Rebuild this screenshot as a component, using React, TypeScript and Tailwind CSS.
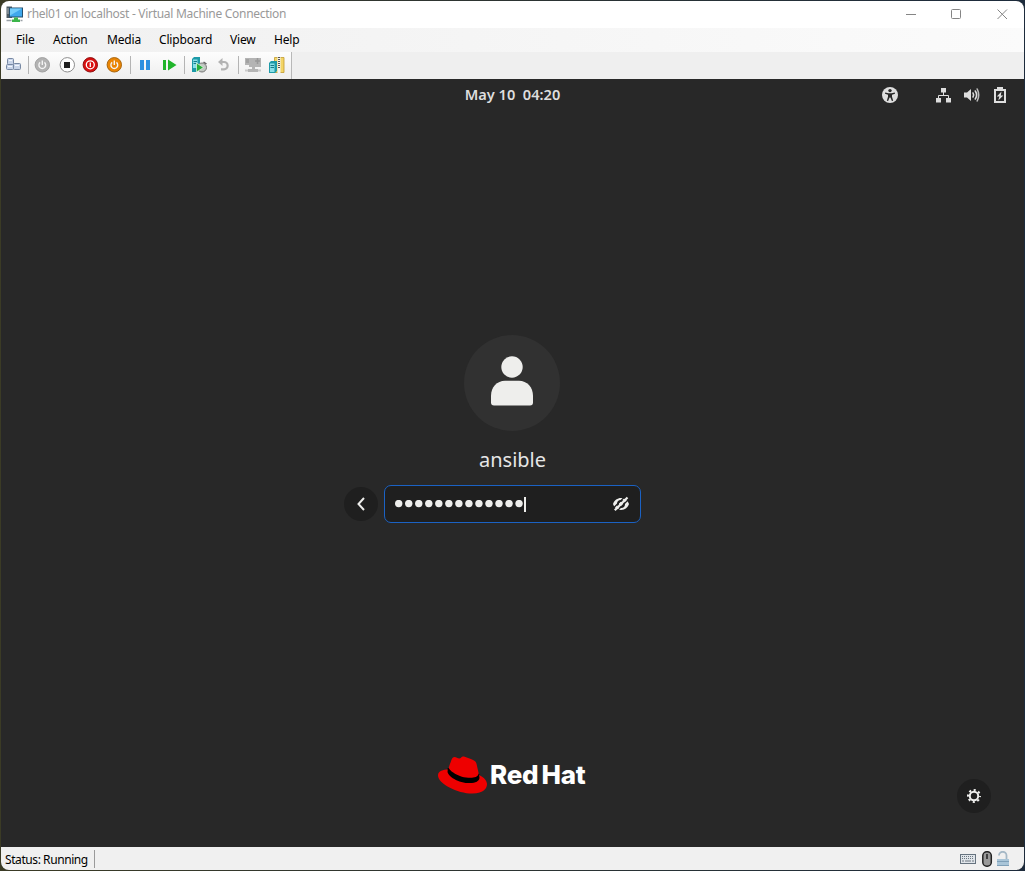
import React from "react";

const Sep = ({ m }: { m: string }) => <div className={`w-px h-[18px] bg-[#b4b4b4] shrink-0 ${m}`} />;

const MENU: [string, string][] = [
  ["File", "w-[37px]"],
  ["Action", "w-[54px]"],
  ["Media", "w-[52px]"],
  ["Clipboard", "w-[71px]"],
  ["View", "w-[44px]"],
  ["Help", "w-[40px]"],
];

const Power = ({ fill, stroke, icon }: { fill: string; stroke: string; icon: string }) => (
  <svg width="16" height="16" viewBox="0 0 16 16" className="shrink-0">
    <circle cx="8.3" cy="7.8" r="7.2" fill={fill} stroke={stroke} />
    {icon === "stop" && <rect x="5" y="5" width="6" height="6" fill="#222" />}
    {icon === "power" && (
      <g fill="none" stroke="#f4f4f4" strokeWidth="1.4">
        <path d="M6.2 5.4a3.4 3.4 0 1 0 4.2 0M8.300 3.4V8" />
      </g>
    )}
    {icon === "off" && (
      <g fill="none" stroke="#fff" strokeWidth="1.3">
        <circle cx="8.3" cy="7.8" r="4" />
        <path d="M8.300 5.6v4.4" />
      </g>
    )}
  </svg>
);

const TitleIcon = () => (
  <svg width="17" height="17" viewBox="0 0 17 17">
    <rect x="0.500" y="0.5" width="5.500" height="11.500" fill="#4e5a62" />
    <path d="M1 3h4M1 5h4M1 7h3" stroke="#aab4ba" />
    <rect x="3.500" y="2" width="13" height="9" fill="#3fa8ec" stroke="#26506e" />
    <path d="M4 2.500h12L4 9.500z" fill="#74cdfa" />
    <path d="M8 11.500h4v2h2v2.500H6v-2.500h2z" fill="#3cb54a" />
    <path d="M0.500 14.500h5M14.500 14.500h2" stroke="#9aa1a6" strokeWidth="1.500" />
  </svg>
);

const Tower = ({ x, y }: { x: number; y: number }) => (
  <g transform={`translate(${x} ${y})`}>
    <path d="M0 2l2-2h6v10l-2 2H0z" fill="#1d9aa8" />
    <rect x="1" y="2.5" width="4.5" height="8.5" fill="#8adfe8" />
    <path d="M1.5 4.5h3.5M1.5 6.5h3.5" stroke="#167b88" />
  </g>
);

function Toolbar() {
  return (
    <div className="h-[27px] bg-[#efefef]">
      <div className="flex h-full w-[291px] items-center border-r border-[#b8b8b8] bg-gradient-to-b from-[#fdfdfd] to-[#eeeeee] pb-[2px] pl-[5px]">
        <svg width="16" height="14" viewBox="0 0 16 14" className="shrink-0">
          <g fill="#c8d4e8" stroke="#7788a3">
            <rect x="1.5" y="0.5" width="6" height="6" rx="1" />
            <rect x="0.5" y="6.5" width="7" height="5" rx="1" />
            <rect x="7.5" y="5.5" width="7" height="6" rx="1" />
          </g>
          <path d="M3 2.500h3M2 8.500h4M9 7.500h4" stroke="#f3f7fd" />
        </svg>
        <Sep m="ml-[6px] mr-[5px]" />
        <Power fill="#b2b2b2" stroke="#a0a0a0" icon="power" />
        <div className="w-[9px]" />
        <Power fill="#fff" stroke="#8c8c8c" icon="stop" />
        <div className="w-[7px]" />
        <Power fill="#d90f0f" stroke="#8e1010" icon="off" />
        <div className="w-2" />
        <Power fill="#ea8504" stroke="#a86610" icon="power" />
        <Sep m="ml-[8px] mr-[9px]" />
        <svg width="10" height="10" viewBox="0 0 10 10" className="shrink-0">
          <path d="M0 0h4v10H0zM6 0h4v10H6z" fill="#2d90e0" />
        </svg>
        <svg width="14" height="12" viewBox="0 0 14 12" className="ml-[13px] shrink-0">
          <path d="M0 1h3v10H0zM5 .5L13.500 6 5 11.500z" fill="#21b52b" />
        </svg>
        <Sep m="ml-[7px] mr-[6px]" />
        <svg width="16" height="16" viewBox="0 0 16 16" className="shrink-0">
          <Tower x={1} y={0} />
          <path d="M1 12h5v3H1z" fill="#1c99a7" />
          <circle cx="11" cy="10.500" r="4.500" fill="#c3c7c3" stroke="#777" />
          <path d="M12.500 5l3 2" stroke="#666" strokeWidth="1.500" />
          <path d="M5.500 6l7 4.500-7 4.500z" fill="#27ae3a" stroke="#eaf8e9" strokeWidth=".7" />
        </svg>
        <svg width="11" height="13" viewBox="0 0 11 13" className="ml-[11px] shrink-0">
          <path d="M2 4h4a3.600 3.600 0 0 1 0 7.300H3" fill="none" stroke="#b3b3b3" strokeWidth="2.200" />
          <path d="M0 4l4.500-4v8z" fill="#b3b3b3" />
        </svg>
        <Sep m="ml-[9px] mr-[6px]" />
        <svg width="16" height="16" viewBox="0 0 16 16" className="shrink-0">
          <path d="M0 1h16v9h-6v2h3v3H3v-3h4v-2H4V8H0z" fill="#b4b4b4" />
          <path d="M1 3h3M1 5h3" stroke="#8f8f8f" />
          <path d="M12.500 1v6M10 4h5" stroke="#999" strokeWidth="1.500" />
          <path d="M0 13.500h3M13 13.500h3" stroke="#cacaca" strokeWidth="2" />
        </svg>
        <svg width="16" height="16" viewBox="0 0 16 16" className="ml-[8px] shrink-0">
          <path d="M5.500 .5h9.500v15H5.500z" fill="#f3d566" stroke="#c09a2e" strokeWidth=".8" />
          <path d="M10 0v16" stroke="#f4f4f4" strokeWidth="3" />
          <path d="M10 0v11" stroke="#555" strokeWidth="2" strokeDasharray="1 1" />
          <Tower x={0} y={4} />
        </svg>
      </div>
    </div>
  );
}

function TopBar() {
  return (
    <div className="grid h-[32px] grid-cols-[1fr_auto_1fr] items-center text-[#dedede]">
      <span />
      <span className="h-[32px] whitespace-pre font-['Noto_Sans'] text-[14.6px] font-semibold leading-[30px]">May 10  04:20</span>
      <div className="flex items-center justify-end pr-[18px]">
        <svg width="16" height="16" viewBox="0 0 16 16">
          <circle cx="8" cy="8" r="8" fill="#dedede" />
          <circle cx="8" cy="3.600" r="1.700" fill="#282828" />
          <path d="M3.200 5.500l3.300.7h3l3.300-.7.2 1.300-3 .9v2l1.200 4-1.300.4L8.400 10.500h-.8l-1.500 3.600-1.300-.4 1.200-4v-2l-3-.9z" fill="#282828" />
        </svg>
        <svg width="16" height="16" viewBox="0 0 16 16" className="ml-[38px]">
          <path d="M5 1h5v4.500H5zM0 11h5v4.500H0zM10 11h5v4.500h-5z" fill="#dedede" />
          <path d="M7.500 5v3.500M2.500 11V8.500h10V11" fill="none" stroke="#dedede" />
        </svg>
        <svg width="16" height="16" viewBox="0 0 16 16" className="ml-[12px]">
          <path d="M0 5.500h3L7 2v12l-4-3.500H0z" fill="#dedede" />
          <g fill="none" stroke="#dedede" strokeWidth="1.600" strokeLinecap="round">
            <path d="M9 6q1.300 2 0 4M11.300 4q2.600 4 0 8" />
            <path d="M13.200 2q3 6 0 12" stroke="#bbb" />
          </g>
        </svg>
        <svg width="12" height="16" viewBox="0 0 12 16" className="ml-[14px]">
          <path d="M3 0h6v2h3v14H0V2h3zM2 4v10h8V4z" fill="#dedede" fillRule="evenodd" />
          <path d="M7.500 4.500L2.800 9.500h2.500L4.300 13.500l5-5H6.800z" fill="#dedede" />
        </svg>
      </div>
    </div>
  );
}

function RedHat() {
  return (
    <div className="flex h-[38px] items-center">
      <svg width="49" height="38" viewBox="0 2.700 24 18.600">
        <path d="M4.800 8.600L4 11l2 4 9 3 6-1.500-.8-5z" fill="#000" />
        <path d="M16.009 13.386c1.577 0 3.860-.326 3.860-2.202a1.765 1.765 0 0 0-.04-.431l-.94-4.080c-.216-.898-.406-1.305-1.982-2.093-1.223-.625-3.888-1.658-4.676-1.658-.733 0-.947.946-1.822.946-.842 0-1.467-.706-2.255-.706-.757 0-1.250.515-1.630 1.576 0 0-1.060 2.990-1.197 3.424a.810.810 0 0 0-.028.245c0 1.162 4.577 4.974 10.710 4.974m4.101-1.435c.218 1.032.218 1.140.218 1.277 0 1.765-1.984 2.745-4.593 2.745-5.895.004-11.060-3.451-11.060-5.734a2.326 2.326 0 0 1 .190-.925C2.746 9.415 0 9.794 0 12.217c0 3.969 9.405 8.861 16.851 8.861 5.710 0 7.149-2.582 7.149-4.620 0-1.605-1.387-3.425-3.887-4.512" fill="#ee0000" />
      </svg>
      <span className="ml-[3px] whitespace-nowrap font-['Inter'] text-[26px] font-extrabold leading-[38px] tracking-[-0.3px] [word-spacing:-2px] text-white">Red Hat</span>
    </div>
  );
}

export default function App() {
  return (
    <div className="h-[871px] w-[1025px] bg-gradient-to-r from-[#3b3b25] to-[#1d2b3c] p-px">
      <div className="flex h-full flex-col overflow-hidden rounded-[8px] bg-[#282828] font-['Noto_Sans']">
        <div className="flex h-[27px] shrink-0 items-center bg-white pb-px pl-[5px]">
          <TitleIcon />
          <span className="ml-[4px] whitespace-nowrap text-[12px] tracking-[-0.29px] text-[#999]">rhel01 on localhost - Virtual Machine Connection</span>
          <svg width="104" height="12" viewBox="0 0 104 12" className="ml-auto mr-[15px]" fill="none" stroke="#858585">
            <path d="M1 6.500h10M92.500 1.500l9.500 9.500M102 1.500l-9.500 9.500" />
            <rect x="46.500" y="1.500" width="9" height="9" rx="1" />
          </svg>
        </div>
        <div className="flex h-[24px] shrink-0 items-center bg-gradient-to-r from-[#f0f0f0] to-[#fbfbfb] pl-[15px] text-[12px] tracking-[-0.16px] text-black">
          {MENU.map(([t, w]) => (
            <span key={t} className={`shrink-0 whitespace-nowrap ${w}`}>{t}</span>
          ))}
        </div>
        <Toolbar />
        <div className="flex h-[768px] shrink-0 flex-col bg-[#282828]">
          <TopBar />
          <div className="flex flex-col items-center pt-[224px]">
            <div className="mr-[2px] flex h-24 w-24 items-center justify-center rounded-full bg-[#313131] pb-[5px]">
              <svg width="44" height="50" viewBox="0 0 44 50" fill="#eeeeec">
                <circle cx="22" cy="11" r="10.700" />
                <path d="M1 40c0-9 6-15.300 14-15.300h14c8 0 14 6.300 14 15.300v6.500q0 3-3 3H4q-3 0-3-3z" />
              </svg>
            </div>
            <div className="mt-[13px] h-[32px] font-['Noto_Sans'] text-[20px] leading-[32px] text-[#e6e6e6]">ansible</div>
          </div>
          <div className="ml-[343px] mt-[9px] flex items-center">
            <div className="flex h-[34px] w-[34px] items-center justify-center rounded-full bg-[#1f1f1f]">
              <svg width="12" height="14" viewBox="0 0 12 14">
                <path d="M9 1L3.500 7 9 13" fill="none" stroke="#eeeeec" strokeWidth="2" />
              </svg>
            </div>
            <div className="ml-[6px] flex h-[38px] w-[257px] items-center rounded-[7px] border border-[#1b62c4] bg-[#1f1f1f] pl-[10px]">
              <svg width="128" height="8" viewBox="0 0 128 8" fill="#eeeeec">
                {Array.from({ length: 13 }, (_, i) => (
                  <circle key={i} cx={3.700 + i * 10.030} cy="3.600" r="3.700" />
                ))}
              </svg>
              <div className="ml-px h-[15px] w-[2px] bg-[#eeeeec]" />
              <svg width="16" height="16" viewBox="0 0 16 16" className="ml-auto mr-[11px]">
                <path fillRule="evenodd" d="M8 2C4.500 2 1.200 4.200 0 8c1.200 3.800 4.500 6 8 6s6.800-2.200 8-6c-1.200-3.800-4.500-6-8-6zm0 2a4 4 0 1 1 0 8 4 4 0 0 1 0-8z" fill="#eeeeec" />
                <circle cx="8" cy="8" r="2.200" fill="#eeeeec" />
                <path d="M12.500 0L0 12.500M16 3L4 15" stroke="#1f1f1f" strokeWidth="1.300" />
                <path d="M14.500 1.500L1.800 14.200" stroke="#eeeeec" strokeWidth="2.200" />
              </svg>
            </div>
          </div>
          <div className="ml-[437px] mt-[233px]"><RedHat /></div>
          <div className="-mt-[15px] ml-[956px] flex h-[34px] w-[34px] items-center justify-center rounded-full bg-[#1f1f1f]">
            <svg width="14" height="14" viewBox="0 0 14 14" fill="none" stroke="#eeeeec">
              <circle cx="7" cy="7" r="4.200" strokeWidth="2" />
              <circle cx="7" cy="7" r="6" strokeWidth="2" strokeDasharray="2.100 2.612" strokeDashoffset="1.050" />
            </svg>
          </div>
        </div>
        <div className="flex h-[23px] items-center bg-[#f0f0f0] pl-[4px] text-[12px] text-black">
          <span className="whitespace-nowrap pt-[2px] tracking-[-0.42px]">Status: Running</span>
          <div className="ml-[6px] h-[18px] w-px bg-[#9a9a9a]" />
          <svg width="50" height="16" viewBox="0 0 50 16" className="ml-auto mr-[14px]">
            <rect x="0.500" y="3.500" width="15" height="9" fill="#e0e5ea" stroke="#66737f" />
            <path d="M2 5.500h12M2 7.500h12" stroke="#6c7780" strokeDasharray="1 1" />
            <path d="M2 10h2M5 10h6M12 10h2" stroke="#6c7780" />
            <rect x="22.800" y="0.800" width="8.500" height="14.400" rx="4" fill="#9a9a9a" stroke="#222" strokeWidth="1.500" />
            <path d="M27 3v5" stroke="#222" strokeWidth="1.500" />
            <path d="M39 4.500a3.700 3.700 0 0 1 7.500 0V8" fill="none" stroke="#a5b8c6" strokeWidth="1.800" />
            <rect x="37" y="8" width="12" height="7" fill="#a9c5d8" />
            <path d="M37 10.500h12M37 14.500h12" stroke="#7fa0b8" />
          </svg>
        </div>
      </div>
    </div>
  );
}
